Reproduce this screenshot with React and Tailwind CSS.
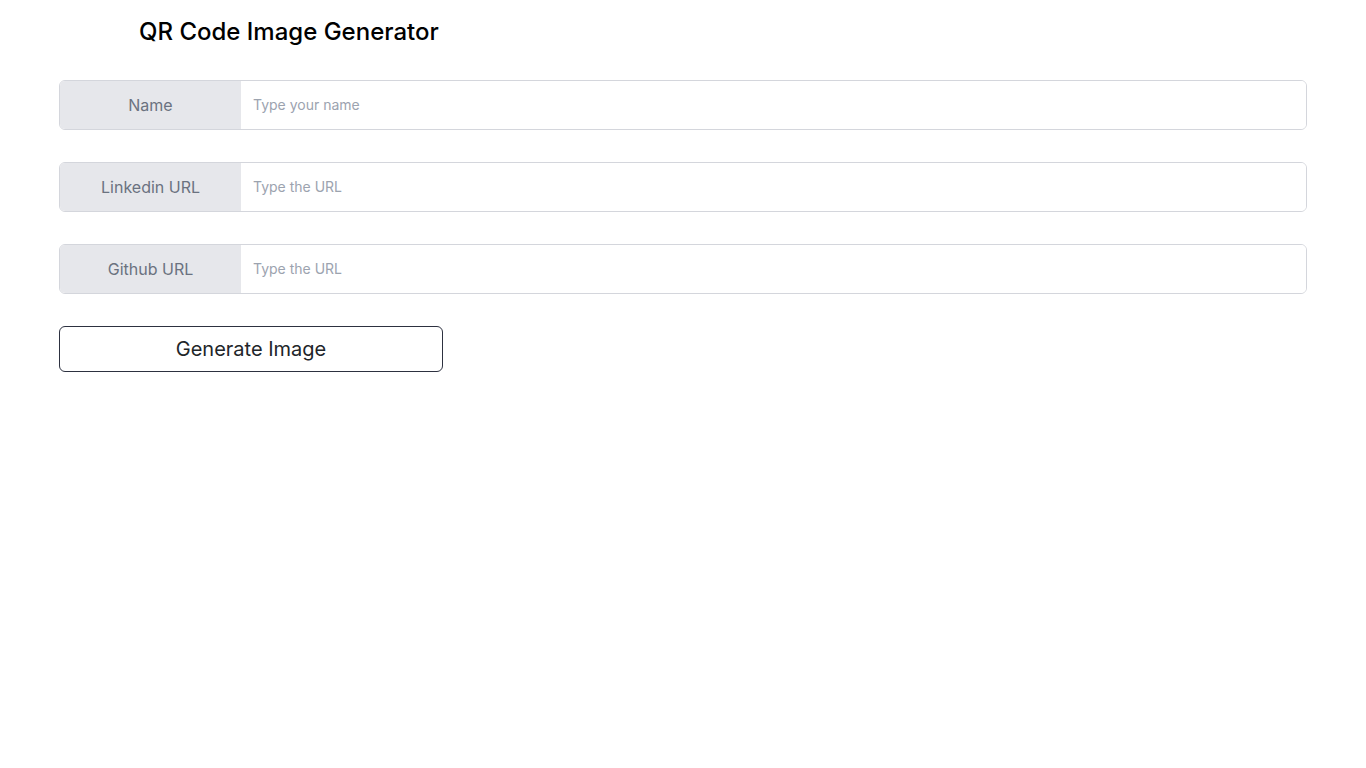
export default function App() {
  const rows = [
    { label: "Name", ph: "Type your name" },
    { label: "Linkedin URL", ph: "Type the URL" },
    { label: "Github URL", ph: "Type the URL" },
  ];
  return (
    <div className="min-h-screen bg-white px-[59px]" style={{ fontFamily: "Inter, 'Liberation Sans', sans-serif" }}>
      <h1 className="pl-[80px] pt-[16px] text-[24px] font-medium leading-[32px] text-black">QR Code Image Generator</h1>
      <div className="mt-[32px] flex flex-col gap-[32px]">
        {rows.map((r) => (
          <div key={r.label} className="flex h-[50px] rounded-[6px] border border-[#d4d6dc] overflow-hidden">
            <div className="flex w-[181px] shrink-0 items-center justify-center bg-[#e6e7eb] text-[16px] text-[#6b7280]">{r.label}</div>
            <input className="flex-1 bg-white px-[12px] pb-[2px] text-[14px] text-[#374151] outline-none placeholder:text-[#9ca3af]" placeholder={r.ph} />
          </div>
        ))}
      </div>
      <button className="mt-[32px] h-[46px] w-[384px] rounded-[6px] border border-[#2d3140] bg-white text-[20px] text-[#212529]">Generate Image</button>
    </div>
  );
}
